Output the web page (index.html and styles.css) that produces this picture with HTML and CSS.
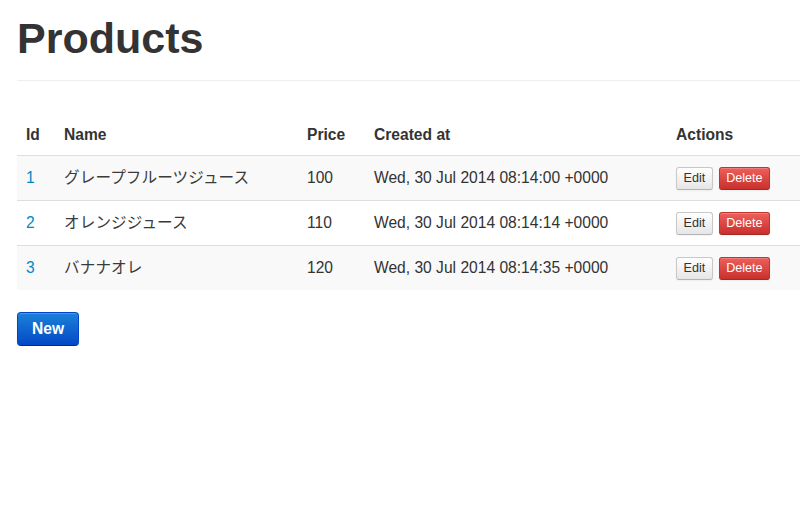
FILE: index.html
```html
<!DOCTYPE html>
<html lang="ja">
<head>
<meta charset="utf-8">
<title>Products</title>
<link rel="stylesheet" href="styles.css">
</head>
<body>
<div class="container">
  <div class="page-header">
    <h1>Products</h1>
  </div>
  <table class="table">
    <colgroup>
      <col class="c-id"><col class="c-name"><col class="c-price"><col class="c-created"><col class="c-actions">
    </colgroup>
    <thead>
      <tr><th>Id</th><th>Name</th><th>Price</th><th>Created at</th><th>Actions</th></tr>
    </thead>
    <tbody>
      <tr class="odd">
        <td><a class="link" href="#">1</a></td>
        <td class="name">グレープフルーツジュース</td>
        <td>100</td>
        <td>Wed, 30 Jul 2014 08:14:00 +0000</td>
        <td><span class="actions"><a class="btn btn-small" href="#">Edit</a><a class="btn btn-small btn-danger" href="#">Delete</a></span></td>
      </tr>
      <tr>
        <td><a class="link" href="#">2</a></td>
        <td class="name">オレンジジュース</td>
        <td>110</td>
        <td>Wed, 30 Jul 2014 08:14:14 +0000</td>
        <td><span class="actions"><a class="btn btn-small" href="#">Edit</a><a class="btn btn-small btn-danger" href="#">Delete</a></span></td>
      </tr>
      <tr class="odd">
        <td><a class="link" href="#">3</a></td>
        <td class="name">バナナオレ</td>
        <td>120</td>
        <td>Wed, 30 Jul 2014 08:14:35 +0000</td>
        <td><span class="actions"><a class="btn btn-small" href="#">Edit</a><a class="btn btn-small btn-danger" href="#">Delete</a></span></td>
      </tr>
    </tbody>
  </table>
  <a class="btn btn-primary" href="#">New</a>
</div>
</body>
</html>
```

FILE: styles.css
```css
html, body {
  margin: 0;
  padding: 0;
  overflow: hidden;
  background: #fff;
}
body {
  font-family: "Liberation Sans", Arial, "Noto Sans CJK JP", sans-serif;
  font-size: 15.6px;
  line-height: 22px;
  color: #333;
}
.container {
  width: 783px;
  padding-left: 17px;
}
.page-header {
  margin-top: 16px;
  padding-bottom: 19px;
  border-bottom: 1px solid #eee;
}
.page-header h1 {
  margin: 0;
  font-size: 43px;
  line-height: 45px;
  font-weight: bold;
  color: #333;
}
.table {
  width: 100%;
  margin-top: 34px;
  border-collapse: collapse;
  border-spacing: 0;
  table-layout: fixed;
}
.c-id { width: 38px; }
.c-name { width: 243px; }
.c-price { width: 67px; }
.c-created { width: 302px; }
.table th {
  text-align: left;
  font-weight: bold;
  padding: 9px 9px;
  height: 22px;
}
.table td {
  border-top: 1px solid #ddd;
  padding: 0 9px;
  height: 44px;
  vertical-align: middle;
}
.table tbody tr.odd td {
  background: #f9f9f9;
}
.table td.name {
  font-family: "Noto Sans CJK JP", sans-serif;
  font-size: 15.6px;
  line-height: 20px;
  letter-spacing: 0.1px;
  padding-bottom: 4px;
  height: 40px;
  color: #3a3a3a;
}
.link {
  color: #0088cc;
  text-decoration: none;
}
.actions {
  display: flex;
  gap: 6px;
  padding-top: 1px;
}
.btn {
  display: inline-block;
  box-sizing: border-box;
  text-decoration: none;
  text-align: center;
  color: #333;
  border: 1px solid #c8c8c8;
  border-bottom-color: #b3b3b3;
  background: linear-gradient(#ffffff, #e6e6e6);
  box-shadow: inset 0 1px 0 rgba(255,255,255,.2), 0 1px 2px rgba(0,0,0,.05);
}
.btn-small {
  height: 23px;
  line-height: 21px;
  padding: 0 6.5px;
  font-size: 12.6px;
  border-radius: 3px;
}
.btn-danger {
  color: #fff;
  border-color: #bd362f #bd362f #a02b25;
  background: linear-gradient(#ee5f5b, #c9302c);
}
.btn-primary {
  margin-top: 22px;
  height: 34px;
  line-height: 32px;
  padding: 0 14px;
  font-size: 15.6px;
  font-weight: bold;
  border-radius: 4px;
  color: #fff;
  border-color: #0044cc #0044cc #002a80;
  background: linear-gradient(#1a82d8, #0448c8);
}
```
